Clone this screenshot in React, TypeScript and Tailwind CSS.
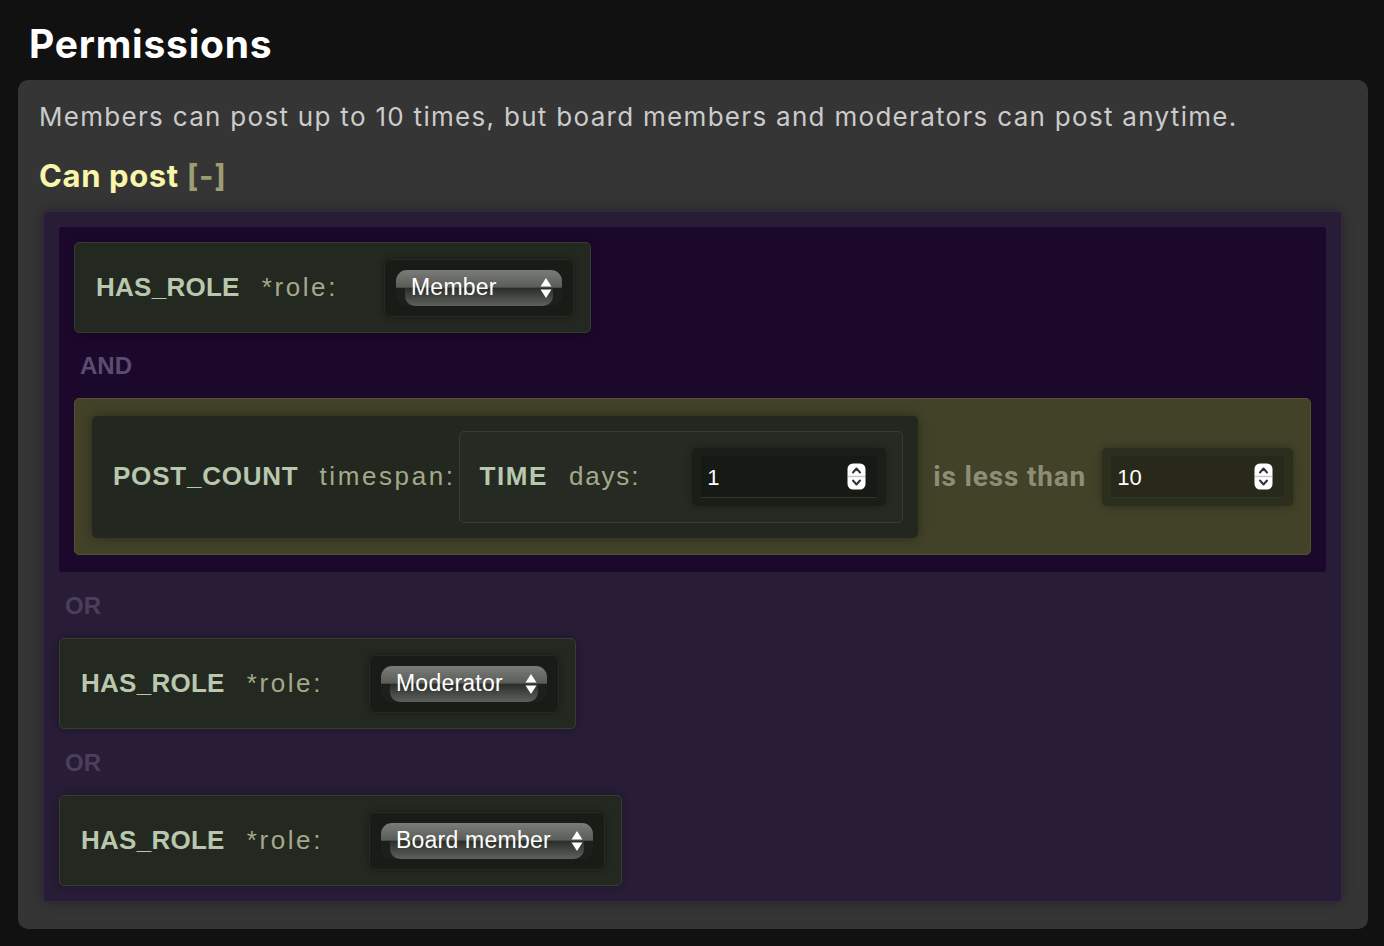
import React from 'react';

const sans = "font-['Liberation_Sans',Arial,sans-serif]";
const inter = "font-['Inter','Noto_Sans',sans-serif]";

function Arrows() {
  return (
    <svg width="12" height="22" viewBox="0 0 12 22" className="shrink-0">
      <path d="M6 1 L11.5 9.5 L0.5 9.5 Z" fill="#ffffff" />
      <path d="M6 21 L11.5 12.5 L0.5 12.5 Z" fill="#ffffff" />
    </svg>
  );
}

function Spinner() {
  return (
    <svg width="19" height="27" viewBox="0 0 19 27" className="shrink-0">
      <rect x="0.5" y="0.5" width="18" height="26" rx="5.5" fill="#ffffff" />
      <line x1="1" y1="13.5" x2="18" y2="13.5" stroke="#c9c9c9" strokeWidth="1.5" />
      <path d="M6 9.5 L9.5 5.5 L13 9.5" fill="none" stroke="#333333" strokeWidth="2" strokeLinecap="round" strokeLinejoin="round" />
      <path d="M6 17.5 L9.5 21.5 L13 17.5" fill="none" stroke="#333333" strokeWidth="2" strokeLinecap="round" strokeLinejoin="round" />
    </svg>
  );
}

function Select({ value, width }: { value: string; width: string }) {
  return (
    <div className="rounded-[6px] border border-[#252a22] bg-[#181c16] px-[11px] py-[10px] shadow-[0_0_6px_rgba(0,0,0,0.35)]">
      <div
        className={`relative h-[36px] ${width} overflow-hidden rounded-[11px] bg-[linear-gradient(to_bottom,#7a7c77_0%,#5a5c57_48%,#1c1f1a_50%,#1c1f1a_100%)]`}
      >
        <div className="absolute bottom-0 left-[9px] right-[9px] h-[18px] rounded-b-[10px] bg-[linear-gradient(to_bottom,#2a2d28_0%,#4a4c48_60%,#5e605c_100%)]" />
        <div className="relative flex h-full items-center justify-between pl-[15px] pr-[10px]">
          <span className={`${sans} text-[23px] leading-none text-white tracking-[0.01em]`}>{value}</span>
          <Arrows />
        </div>
      </div>
    </div>
  );
}

function HasRole({ value, width }: { value: string; width: string }) {
  return (
    <div className="flex h-[91px] w-fit items-center rounded-[5px] border border-[#363d31] bg-[#232820] pl-[21px] pr-[16px] shadow-[0_0_10px_rgba(0,0,0,0.25)]">
      <span className={`${sans} text-[26px] font-bold text-[#b8c7ad] tracking-[0.01em]`}>HAS_ROLE</span>
      <span className={`${sans} ml-[22px] text-[26px] text-[#a4a98a] tracking-[0.1em]`}>*role:</span>
      <div className="ml-[46px]">
        <Select value={value} width={width} />
      </div>
    </div>
  );
}

function NumberInput({ value, outer, inner }: { value: string; outer: string; inner: string }) {
  return (
    <div className={`flex h-[58px] items-center rounded-[5px] ${outer} px-[9px] shadow-[0_0_8px_rgba(0,0,0,0.3)]`}>
      <div className={`flex h-[42px] w-full items-center justify-between border-b border-[#30352b] ${inner} pl-[6px] pr-[11px]`}>
        <span className={`${sans} pt-[3px] text-[22px] leading-none text-white`}>{value}</span>
        <Spinner />
      </div>
    </div>
  );
}

function Joiner({ label, color, space }: { label: string; color: string; space: string }) {
  return (
    <div className={`${sans} ${space} h-[26px] pl-[6px] text-[24px] font-bold leading-[26px] ${color}`}>{label}</div>
  );
}

export default function App() {
  return (
    <div className="min-h-[946px] w-[1384px] bg-[#111111] pl-[18px] pr-[16px]">
      <h1 className={`${inter} ml-[11px] pt-[22px] text-[39px] font-bold leading-[44px] text-white tracking-[0.02em]`}>
        Permissions
      </h1>

      <div className="mt-[14px] rounded-[10px] bg-[#353535] pb-[27px] pl-[21px] pr-[26px] pt-[21px]">
        <p className={`${inter} text-[26px] leading-[32px] text-[#cbcbcb] tracking-[0.05em]`}>
          Members can post up to 10 times, but board members and moderators can post anytime.
        </p>
        <div className={`${inter} mt-[25px] text-[31px] font-bold leading-[36px] tracking-[0.02em]`}>
          <span className="text-[#f8f6aa]">Can post</span> <span className="text-[#9d9c72]">[-]</span>
        </div>

        <div className="ml-[4px] mt-[17px] rounded-[4px] border border-[#33264a] bg-[#281c37] p-[15px] shadow-[0_0_14px_rgba(0,0,0,0.35)]">
          <div className="rounded-[3px] bg-[#1b082b] px-[15px] pb-[17px] pt-[15px]">
            <HasRole value="Member" width="w-[166px]" />
            <Joiner label="AND" color="text-[#5c4b70]" space="mt-[20px] mb-[19px]" />
            <div className="flex h-[157px] items-center rounded-[5px] border border-[#52522f] bg-[#424229] pl-[17px] pr-[17px]">
              <div className="flex h-[122px] shrink-0 items-center rounded-[5px] bg-[#22281f] pl-[21px] pr-[15px] shadow-[0_0_12px_rgba(0,0,0,0.35)]">
                <span className={`${sans} text-[26px] font-bold text-[#b8c7ad] tracking-[0.03em]`}>POST_COUNT</span>
                <span className={`${sans} ml-[21px] text-[26px] text-[#a4a98a] tracking-[0.1em]`}>timespan:</span>
                <div className="ml-[3px] flex h-[92px] items-center rounded-[5px] border border-[#353c31] bg-[#252b22] pl-[20px] pr-[16px]">
                  <span className={`${sans} text-[26px] font-bold text-[#b8c7ad] tracking-[0.06em]`}>TIME</span>
                  <span className={`${sans} ml-[21px] text-[26px] text-[#a4a98a] tracking-[0.07em]`}>days:</span>
                  <div className="ml-[52px] w-[194px]">
                    <NumberInput value="1" outer="bg-[#1a1e18]" inner="bg-[#161914]" />
                  </div>
                </div>
              </div>
              <span className={`${"font-['Roboto',sans-serif]"} ml-[15px] shrink-0 whitespace-nowrap text-[28px] font-bold text-[#8c8e77] tracking-[0.03em]`}>
                is less than
              </span>
              <div className="ml-[16px] w-[191px] shrink-0">
                <NumberInput value="10" outer="bg-[#2c2e1e]" inner="bg-[#28291b]" />
              </div>
            </div>
          </div>
          <Joiner label="OR" color="text-[#4b3f5c]" space="mt-[21px] mb-[19px]" />
          <HasRole value="Moderator" width="w-[166px]" />
          <Joiner label="OR" color="text-[#4b3f5c]" space="mt-[21px] mb-[19px]" />
          <HasRole value="Board member" width="w-[212px]" />
        </div>
      </div>
    </div>
  );
}
